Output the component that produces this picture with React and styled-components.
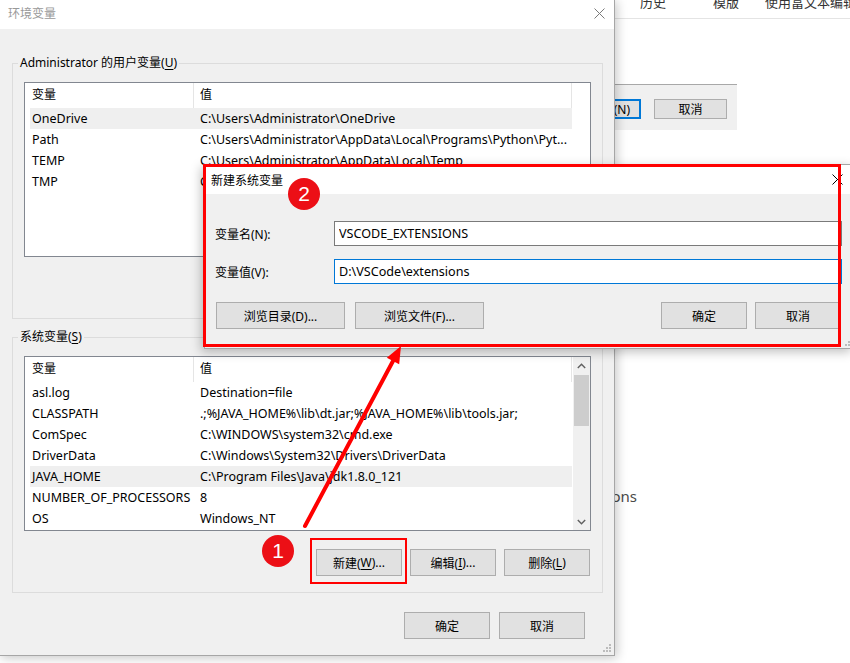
import React from "react";
import styled, { createGlobalStyle } from "styled-components";

const GlobalStyle = createGlobalStyle`
  html, body { margin: 0; padding: 0; background: #fff; }
  body {
    font-family: "Noto Sans", "Noto Sans CJK SC", sans-serif;
    font-size: 12px;
    color: #000;
  }
  *, *::before, *::after { box-sizing: border-box; }
`;

const Desktop = styled.div`
  position: relative;
  width: 850px;
  height: 663px;
  overflow: hidden;
  background: #fff;
`;

/* ---------- background page ---------- */
const PageTabs = styled.div`
  position: absolute;
  left: 615px;
  top: 0;
  width: 235px;
  height: 19px;
  border-bottom: 1px solid #e4e4e4;
  display: flex;
  padding-left: 25px;
  overflow: hidden;
`;
const PageTab = styled.span`
  flex: none;
  width: ${(p) => (p.$w ? `${p.$w}px` : "auto")};
  margin-top: -7px;
  font-size: 13px;
  line-height: 18px;
  color: #333;
  white-space: nowrap;
`;
const BackDialog = styled.div`
  position: absolute;
  left: 480px;
  top: 84px;
  width: 257px;
  height: 46px;
  background: #f0f0f0;
  border-top: 1px solid #a8a8a8;
  display: flex;
  justify-content: flex-end;
  align-items: flex-start;
  gap: 13px;
  padding: 14px 10px 0 0;
`;
const PageText = styled.div`
  position: absolute;
  right: 213px;
  top: 485px;
  font-size: 15px;
  line-height: 22px;
  color: #4a4a4a;
`;

/* ---------- shared window parts ---------- */
const Button = styled.button`
  flex: none;
  width: ${(p) => p.$w || 86}px;
  height: ${(p) => p.$h || 27}px;
  padding: 0 ${(p) => p.$padR || 0}px 0 0;
  margin: 0;
  background: #e1e1e1;
  border: 1px solid ${(p) => (p.$focus ? "#0078d7" : "#adadad")};
  box-shadow: ${(p) => (p.$focus ? "inset 0 0 0 1px #0078d7" : "none")};
  font-family: inherit;
  font-size: 12px;
  color: #000;
  display: flex;
  align-items: center;
  justify-content: ${(p) => (p.$end ? "flex-end" : "center")};
  white-space: nowrap;
`;
const U = styled.span`
  text-decoration: underline;
  text-underline-offset: 2px;
`;
const TitleBar = styled.div`
  flex: none;
  height: 29px;
  background: #fff;
  display: flex;
  align-items: center;
  justify-content: space-between;
  padding: 0 ${(p) => p.$pr}px ${(p) => p.$pb || 0}px ${(p) => p.$pl}px;
  color: ${(p) => (p.$inactive ? "#999" : "#000")};
  font-size: 12px;
`;
const CloseIcon = ({ color }) => (
  <svg width="11" height="11" viewBox="0 0 11 11">
    <path d="M0.5 0.5 L10.5 10.5 M10.5 0.5 L0.5 10.5" stroke={color} strokeWidth="1" fill="none" />
  </svg>
);
const Grip = styled.div`
  position: absolute;
  right: ${(p) => p.$r}px;
  bottom: ${(p) => p.$b}px;
  width: 10px;
  height: 10px;
  line-height: 0;
`;
const GripIcon = () => (
  <svg width="10" height="10" viewBox="0 0 10 10">
    {[[8, 0], [5, 3], [8, 3], [2, 6], [5, 6], [8, 6]].map(([x, y], i) => (
      <rect key={i} x={x} y={y + 2} width="2" height="2" fill="#bcbcbc" />
    ))}
  </svg>
);

/* ---------- main window ---------- */
const MainWindow = styled.div`
  position: absolute;
  left: -1px;
  top: -1px;
  width: 616px;
  height: 657px;
  background: #f0f0f0;
  border: 1px solid #a6a6a6;
  box-shadow: 2px 2px 10px rgba(0, 0, 0, 0.22);
  display: flex;
  flex-direction: column;
`;
const MainBody = styled.div`
  flex: 1;
  display: flex;
  flex-direction: column;
  padding: 26px 11px 0 12px;
`;
const GroupBox = styled.fieldset`
  margin: ${(p) => p.$mt || 0}px 0 0 0;
  padding: 11px 11px 16px 11px;
  border: 1px solid #dcdcdc;
  min-width: 0;
`;
const Legend = styled.legend`
  padding: 0 2px;
  margin-left: -6px;
  line-height: 16px;
  font-size: 12px;
`;
const ListView = styled.div`
  height: 175px;
  background: #fff;
  border: 1px solid #828790;
  display: flex;
  overflow: hidden;
`;
const Table = styled.div`
  flex: none;
  width: 542px;
  margin-left: 5px;
`;
const HeaderRow = styled.div`
  display: flex;
  height: 25px;
  border-right: 1px solid #e5e5e5;
`;
const HeaderCell = styled.div`
  flex: ${(p) => (p.$first ? "none" : "1")};
  width: ${(p) => (p.$first ? "163px" : "auto")};
  padding-left: ${(p) => (p.$first ? 2 : 6)}px;
  border-left: ${(p) => (p.$first ? "none" : "1px solid #e5e5e5")};
  line-height: 24px;
`;
const Row = styled.div`
  display: flex;
  height: 21px;
  line-height: 21px;
  font-size: 12.5px;
  background: ${(p) => (p.$hl ? "#efefef" : "transparent")};
`;
const Cell = styled.div`
  flex: ${(p) => (p.$first ? "none" : "1")};
  width: ${(p) => (p.$first ? "163px" : "auto")};
  padding-left: ${(p) => (p.$first ? 2 : 7)}px;
  white-space: nowrap;
  overflow: hidden;
`;
const ScrollBar = styled.div`
  flex: none;
  margin-left: auto;
  width: 17px;
  background: #f0f0f0;
  display: flex;
  flex-direction: column;
  align-items: center;
`;
const ScrollArrow = styled.div`
  flex: none;
  height: 17px;
  width: 17px;
  display: flex;
  align-items: center;
  justify-content: center;
`;
const ScrollTrack = styled.div`
  flex: 1;
  width: 100%;
  padding: 1px 1px 0;
`;
const Thumb = styled.div`
  height: 51px;
  background: #cdcdcd;
`;
const Chevron = ({ up }) => (
  <svg width="9" height="6" viewBox="0 0 9 6">
    <polyline
      points={up ? "0.8,5 4.5,1.2 8.2,5" : "0.8,1 4.5,4.8 8.2,1"}
      fill="none"
      stroke="#606060"
      strokeWidth="1.4"
    />
  </svg>
);
const ButtonRow = styled.div`
  display: flex;
  justify-content: flex-end;
  gap: ${(p) => p.$gap || 8}px;
  margin-top: ${(p) => p.$mt || 0}px;
  padding-right: ${(p) => p.$pr || 0}px;
`;

/* ---------- new variable dialog ---------- */
const NewDialog = styled.div`
  position: absolute;
  left: 204px;
  top: 164px;
  width: 650px;
  height: 185px;
  background: #f0f0f0;
  border: 1px solid #a6a6a6;
  box-shadow: -3px 3px 10px rgba(0, 0, 0, 0.25);
  display: flex;
  flex-direction: column;
`;
const DialogBody = styled.div`
  flex: 1;
  display: flex;
  flex-direction: column;
  gap: 13px;
  padding: 27px 11px 0 10px;
`;
const FieldRow = styled.div`
  display: flex;
  align-items: center;
  height: 25px;
`;
const FieldLabel = styled.label`
  flex: none;
  width: 119px;
`;
const TextInput = styled.input`
  flex: 1;
  height: 25px;
  margin: 0;
  padding: 0 4px;
  background: #fff;
  border: 1px solid ${(p) => (p.$focus ? "#0078d7" : "#7a7a7a")};
  font-family: inherit;
  font-size: 12.6px;
  color: #000;
  outline: none;
`;
const DialogButtons = styled.div`
  display: flex;
  gap: 10px;
  margin-top: 5px;
  padding: 0 1px 0 1px;
`;
const Spacer = styled.div`
  flex: 1;
`;

/* ---------- annotations ---------- */
const Frame = styled.div`
  position: absolute;
  left: ${(p) => p.$x}px;
  top: ${(p) => p.$y}px;
  width: ${(p) => p.$w}px;
  height: ${(p) => p.$h}px;
  border: ${(p) => p.$t}px solid #ff0000;
  pointer-events: none;
`;
const Badge = styled.div`
  position: absolute;
  left: ${(p) => p.$x - 16}px;
  top: ${(p) => p.$y - 16}px;
  width: 32px;
  height: 32px;
  border-radius: 50%;
  background: #ec0f16;
  color: #fff;
  font-family: "Liberation Sans", Arial, sans-serif;
  font-size: 21px;
  display: flex;
  align-items: center;
  justify-content: center;
`;
const Overlay = styled.svg`
  position: absolute;
  left: 0;
  top: 0;
  pointer-events: none;
`;

const userVars = [
  ["OneDrive", "C:\\Users\\Administrator\\OneDrive", true],
  ["Path", "C:\\Users\\Administrator\\AppData\\Local\\Programs\\Python\\Pyt..."],
  ["TEMP", "C:\\Users\\Administrator\\AppData\\Local\\Temp"],
  ["TMP", "C:\\Users\\Administrator\\AppData\\Local\\Temp"],
];
const sysVars = [
  ["asl.log", "Destination=file"],
  ["CLASSPATH", ".;%JAVA_HOME%\\lib\\dt.jar;%JAVA_HOME%\\lib\\tools.jar;"],
  ["ComSpec", "C:\\WINDOWS\\system32\\cmd.exe"],
  ["DriverData", "C:\\Windows\\System32\\Drivers\\DriverData"],
  ["JAVA_HOME", "C:\\Program Files\\Java\\jdk1.8.0_121", true],
  ["NUMBER_OF_PROCESSORS", "8"],
  ["OS", "Windows_NT"],
];

const VarList = ({ rows, scroll }) => (
  <ListView>
    <Table>
      <HeaderRow>
        <HeaderCell $first>变量</HeaderCell>
        <HeaderCell>值</HeaderCell>
      </HeaderRow>
      {rows.map(([k, v, hl]) => (
        <Row key={k} $hl={hl}>
          <Cell $first>{k}</Cell>
          <Cell>{v}</Cell>
        </Row>
      ))}
    </Table>
    {scroll && (
      <ScrollBar>
        <ScrollArrow>
          <Chevron up />
        </ScrollArrow>
        <ScrollTrack>
          <Thumb />
        </ScrollTrack>
        <ScrollArrow>
          <Chevron />
        </ScrollArrow>
      </ScrollBar>
    )}
  </ListView>
);

// arrow geometry
const tail = [305, 526];
const tip = [401, 346];
const dx = tip[0] - tail[0];
const dy = tip[1] - tail[1];
const len = Math.hypot(dx, dy);
const ux = dx / len;
const uy = dy / len;
const base = [tip[0] - 17 * ux, tip[1] - 17 * uy];
const c1 = [base[0] - 7 * uy, base[1] + 7 * ux];
const c2 = [base[0] + 7 * uy, base[1] - 7 * ux];

export default function App() {
  return (
    <Desktop>
      <GlobalStyle />

      <PageTabs>
        <PageTab $w={73}>历史</PageTab>
        <PageTab $w={52}>模版</PageTab>
        <PageTab>使用富文本编辑器</PageTab>
      </PageTabs>
      <BackDialog>
        <Button $w={73} $h={20} $focus $end $padR={10}>
          确定(N)
        </Button>
        <Button $w={73} $h={20}>
          取消
        </Button>
      </BackDialog>
      <PageText>Extensions</PageText>

      <MainWindow>
        <TitleBar $inactive $pl={8} $pr={9} $pb={3}>
          <span>环境变量</span>
          <CloseIcon color="#7a7a7a" />
        </TitleBar>
        <MainBody>
          <GroupBox>
            <Legend>
              Administrator 的用户变量(<U>U</U>)
            </Legend>
            <VarList rows={userVars} />
            <ButtonRow $mt={18} $pr={1}>
              <Button>
                新建(<U>N</U>)...
              </Button>
              <Button>
                编辑(<U>E</U>)...
              </Button>
              <Button>
                删除(<U>D</U>)
              </Button>
            </ButtonRow>
          </GroupBox>
          <GroupBox $mt={10}>
            <Legend>
              系统变量(<U>S</U>)
            </Legend>
            <VarList rows={sysVars} scroll />
            <ButtonRow $mt={18} $pr={1}>
              <Button>
                新建(<U>W</U>)...
              </Button>
              <Button>
                编辑(<U>I</U>)...
              </Button>
              <Button>
                删除(<U>L</U>)
              </Button>
            </ButtonRow>
          </GroupBox>
          <ButtonRow $mt={19} $pr={18} $gap={9}>
            <Button>确定</Button>
            <Button>取消</Button>
          </ButtonRow>
        </MainBody>
        <Grip $r={3} $b={3}>
          <GripIcon />
        </Grip>
      </MainWindow>

      <NewDialog>
        <TitleBar $pl={6} $pr={10}>
          <span>新建系统变量</span>
          <CloseIcon color="#000" />
        </TitleBar>
        <DialogBody>
          <FieldRow>
            <FieldLabel>变量名(N):</FieldLabel>
            <TextInput readOnly value="VSCODE_EXTENSIONS" />
          </FieldRow>
          <FieldRow>
            <FieldLabel>变量值(V):</FieldLabel>
            <TextInput $focus readOnly value="D:\VSCode\extensions" />
          </FieldRow>
          <DialogButtons>
            <Button $w={129}>浏览目录(D)...</Button>
            <Button $w={129}>浏览文件(F)...</Button>
            <Spacer />
            <Button>确定</Button>
            <Button style={{ marginLeft: -2 }}>取消</Button>
          </DialogButtons>
        </DialogBody>
        <Grip $r={0} $b={2}>
          <GripIcon />
        </Grip>
      </NewDialog>

      <Frame $x={203} $y={164} $w={638} $h={183} $t={3} />
      <Frame $x={310} $y={538} $w={97} $h={46} $t={2} />
      <Badge $x={304} $y={194}>2</Badge>
      <Badge $x={278} $y={551}>1</Badge>

      <Overlay width="850" height="663" viewBox="0 0 850 663">
        <line
          x1={tail[0]}
          y1={tail[1]}
          x2={base[0]}
          y2={base[1]}
          stroke="#ff0000"
          strokeWidth="4"
          strokeLinecap="round"
        />
        <polygon points={`${tip[0]},${tip[1]} ${c1[0]},${c1[1]} ${c2[0]},${c2[1]}`} fill="#ff0000" />
      </Overlay>
    </Desktop>
  );
}
